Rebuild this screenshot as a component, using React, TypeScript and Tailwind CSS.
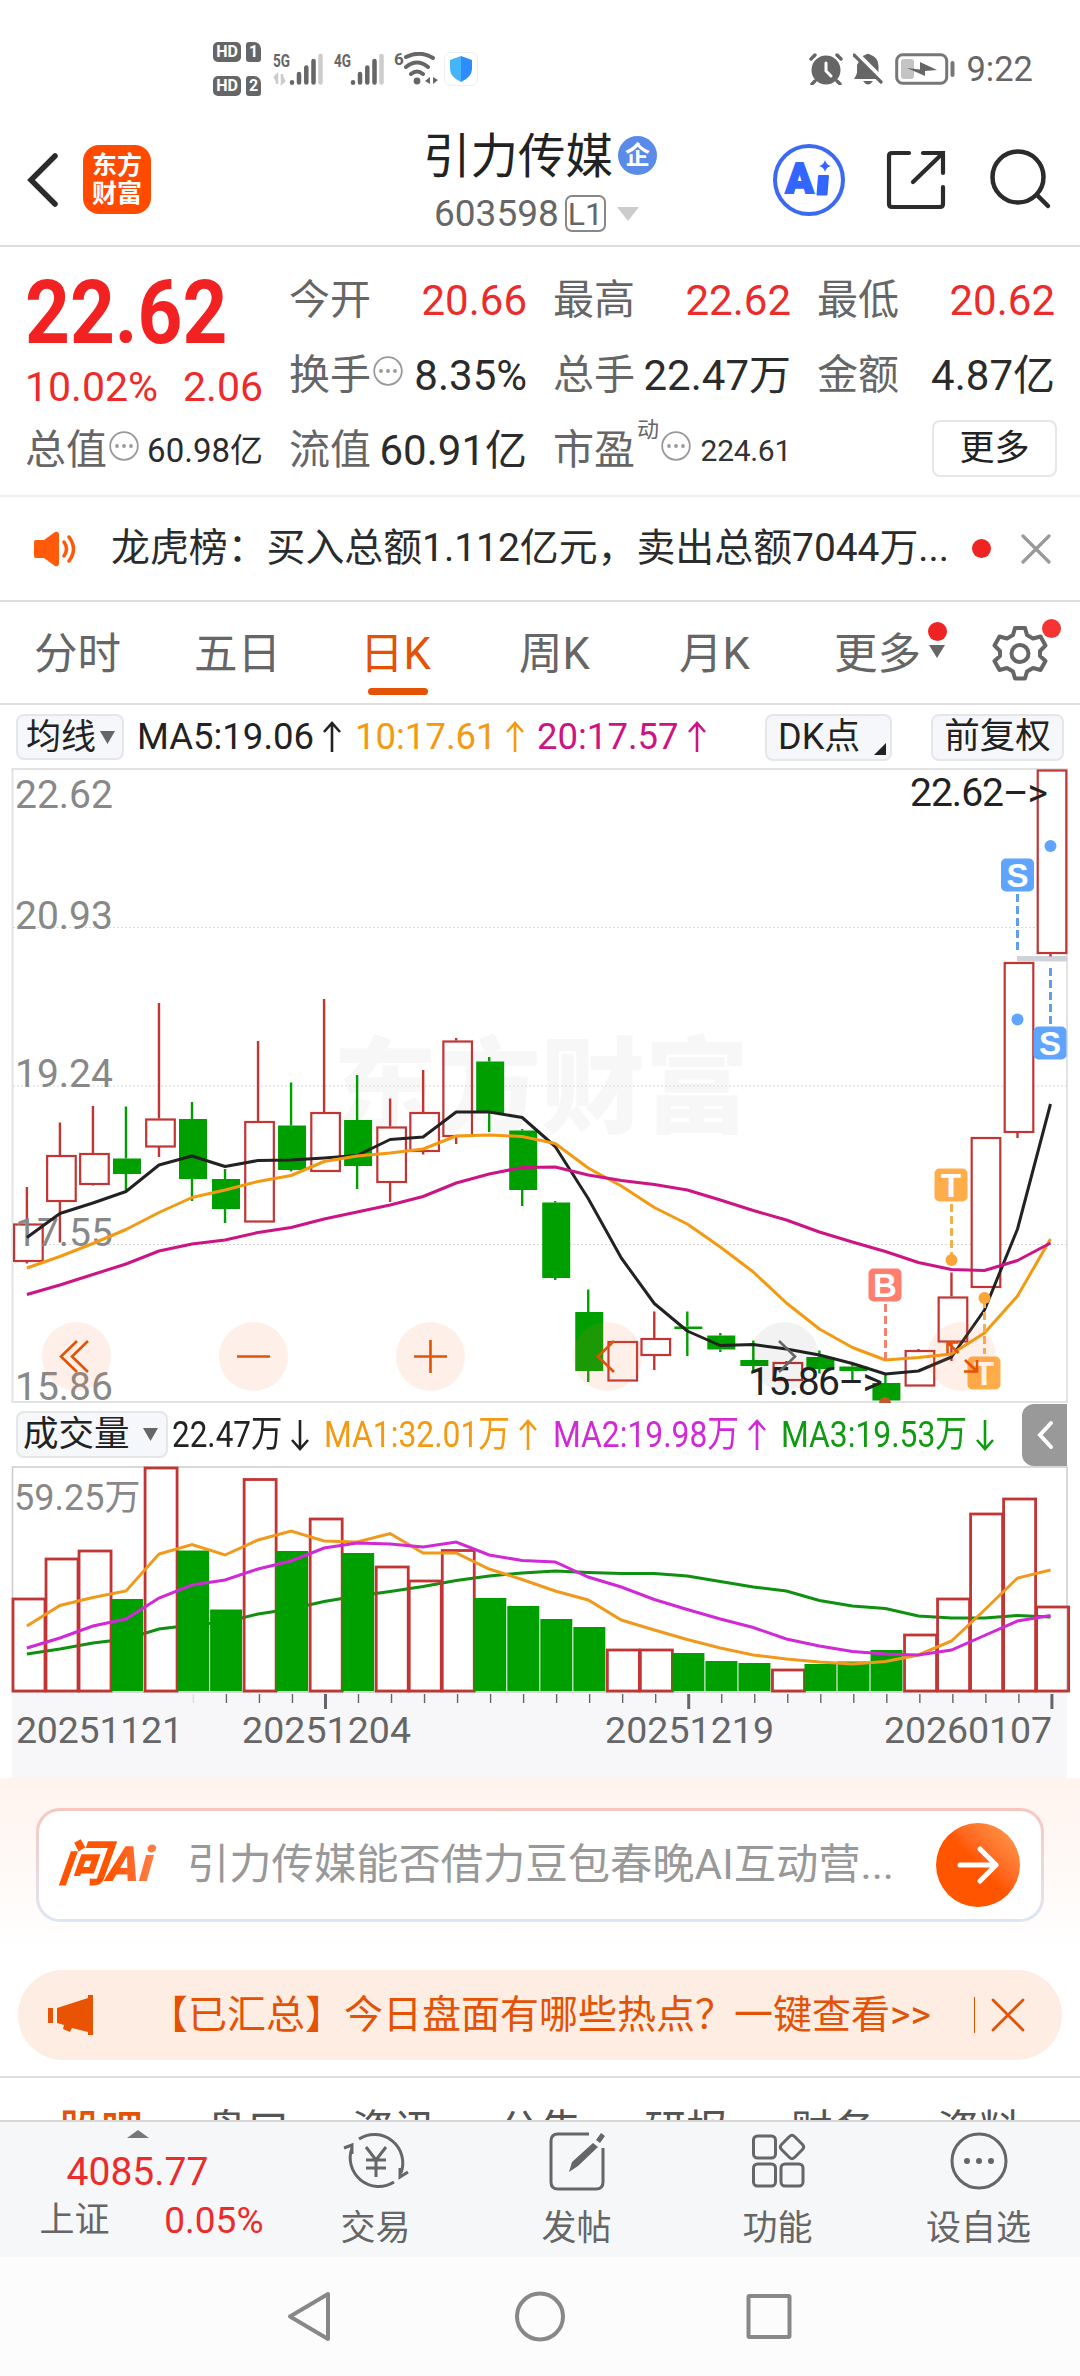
import React from "react";

type Candle = [up: number, high: number, top: number, bottom: number, low: number];

const STEP = 33.02;
const FIRST_X = 26.9;
const cx = (i: number) => FIRST_X + i * STEP;

// [up, high, bodyTop, bodyBottom, low] in chart space
const candles: Candle[] = [
  [1, 1187, 1223.5, 1261, 1263.5],
  [1, 1122.5, 1155, 1201, 1242.5],
  [1, 1106, 1153, 1184, 1185.5],
  [0, 1106.5, 1158.5, 1174, 1190],
  [1, 1003, 1118.5, 1146.5, 1157],
  [0, 1102, 1119, 1179, 1201],
  [0, 1169, 1179, 1209, 1223],
  [1, 1041, 1121, 1221.5, 1221.5],
  [0, 1082.5, 1125.5, 1170, 1171.5],
  [1, 999, 1112, 1171, 1171],
  [0, 1075, 1120, 1166, 1189],
  [1, 1098.5, 1126.5, 1182, 1202],
  [1, 1070, 1112, 1151, 1154.5],
  [1, 1038, 1040.5, 1136, 1144],
  [0, 1057, 1061.5, 1113, 1132],
  [0, 1129, 1130.5, 1190, 1206],
  [0, 1201, 1202.5, 1278, 1280],
  [0, 1289.5, 1312, 1371, 1382],
  [1, 1341, 1341, 1380.5, 1380.5],
  [1, 1311.5, 1338, 1355, 1370],
  [0, 1311.5, 1326.5, 1329, 1356],
  [0, 1333, 1335.5, 1349.5, 1352],
  [0, 1340.5, 1360, 1366, 1371],
  [1, 1361, 1362, 1380, 1380],
  [0, 1350.5, 1357, 1369, 1373.5],
  [0, 1363.5, 1366.5, 1371, 1380],
  [0, 1374.5, 1383, 1400.5, 1400.5],
  [1, 1349, 1350, 1385.5, 1385.5],
  [1, 1272.5, 1296.5, 1341.5, 1361],
  [1, 1137, 1137, 1287, 1287],
  [1, 962, 962, 1132, 1138],
  [1, 769.5, 769.5, 953, 956.5],
];

const ma5 = [
  1237.5, 1213.5, 1203, 1191.5, 1165, 1156, 1166.5, 1160.5, 1160, 1158, 1155.5,
  1139.5, 1137, 1112, 1112, 1117.5, 1146.5, 1198.5, 1258, 1303.5, 1331, 1345.5,
  1344.5, 1349, 1355, 1363.5, 1374, 1371, 1357, 1310, 1229, 1104,
];
const ma10 = [
  1268, 1256.5, 1243.5, 1229.5, 1212.5, 1197.5, 1190, 1181.5, 1175.5, 1161.5,
  1156, 1153, 1149, 1136, 1135, 1136.5, 1143.5, 1168, 1186, 1207.5, 1224, 1247,
  1272, 1303, 1329, 1347.5, 1360, 1357.5, 1354, 1333, 1296, 1239,
];
const ma20 = [
  1294.5, 1285, 1274.5, 1264, 1251, 1244, 1240, 1232.5, 1227.5, 1219, 1212,
  1205, 1196.5, 1183, 1174, 1167.5, 1167, 1175, 1180.5, 1184.5, 1190, 1200,
  1210.5, 1220, 1232, 1242, 1251.5, 1262.5, 1269.5, 1270.5, 1260.5, 1243,
];

const volumes = [
  1598, 1558, 1550, 1599, 1467, 1550.5, 1609.5, 1478.5, 1551, 1518, 1553, 1566,
  1580, 1549.5, 1598, 1606, 1619, 1627, 1649, 1649, 1653, 1661, 1663, 1669,
  1664, 1661.5, 1650, 1634, 1598, 1513, 1498, 1606,
];
const volMa1 = [
  1626, 1605.5, 1597.5, 1591, 1554, 1544.5, 1555, 1540, 1531, 1541, 1542,
  1533.5, 1553, 1553, 1569, 1579.5, 1591, 1600, 1620, 1630, 1639.5, 1648, 1655,
  1659, 1662, 1664, 1661.5, 1655, 1641, 1610, 1578, 1570,
];
const volMa2 = [
  1648, 1638, 1626, 1619, 1598, 1585, 1580, 1569, 1561, 1548, 1543, 1544, 1547,
  1542, 1555, 1560.5, 1562, 1577, 1587, 1599.5, 1609.5, 1619, 1627.5, 1639,
  1646, 1651.5, 1654, 1655, 1650, 1635.5, 1621, 1615.5,
];
const volMa3 = [
  1654, 1649, 1643, 1639, 1629, 1625, 1622, 1614, 1609, 1601.5, 1596, 1591.5,
  1586.5, 1580.5, 1576, 1573, 1571, 1572.5, 1573.5, 1573.5, 1576, 1581.5, 1587,
  1591, 1600.5, 1606, 1608.5, 1616, 1618, 1618, 1615.5, 1617,
];

const toPoints = (ys: number[]) =>
  ys.map((y, i) => `${cx(i).toFixed(1)},${y}`).join(" ");

const RED = "#c23535";
const GREEN = "#009f00";

const Signal = ({ label, arrows }: { label: string; arrows?: boolean }) => (
  <svg width="52" height="34" viewBox="0 0 52 34">
    <text x="0" y="15" fontSize="18" fontWeight="700" fill="#666" textLength="17" lengthAdjust="spacingAndGlyphs">
      {label}
    </text>
    {arrows && (
      <path d="M1 26l3-3v9M9 22v9l3-3" fill="#ccc" stroke="#ccc" strokeWidth="2.500" />
    )}
    <g strokeWidth="4.500" strokeLinecap="round" stroke="#666">
      <path d="M19 30.200v.500M26 22v8.500M33.300 15.500v15M40.500 9v21.500" />
      <path d="M47.500 4v26.500" stroke="#ccc" />
    </g>
  </svg>
);

const HdBadge = ({ n }: { n: string }) => (
  <div className="flex gap-[5px]">
    <span className="flex h-5 w-7 items-center justify-center rounded-[5px] bg-[#666] text-[16px] font-bold leading-[20px] text-white">
      HD
    </span>
    <span className="flex h-5 w-[15px] items-center justify-center rounded-[3px] rounded-tr-[7px] bg-[#666] text-[16px] font-bold leading-[20px] text-white">
      {n}
    </span>
  </div>
);

const StatusBar = () => (
  <div className="flex h-[116px] pl-[213px] pr-[47px] pt-[42px] text-[#666]">
    <div className="flex flex-col gap-[14px]">
      <HdBadge n="1" />
      <HdBadge n="2" />
    </div>
    <div className="ml-[12px] mt-[10px] flex h-[34px]">
      <Signal label="5G" arrows />
      <div className="w-[9px]" />
      <Signal label="4G" />
      <svg className="ml-[8px]" width="46" height="34" viewBox="0 0 46 34">
        <text x="0" y="13" fontSize="17" fontWeight="700" fill="#666">6</text>
        <g fill="none" stroke="#666" strokeWidth="4" strokeLinecap="round">
          <path d="M12 5q14-7 27 1M12 15q11-9 22 0M17 22q6-5 12 0" />
        </g>
        <circle cx="23" cy="29" r="3.400" fill="#666" />
        <path d="M31 29l5-4v7zM39 25v7l5-4z" fill="#666" />
      </svg>
      <span className="ml-[4px] flex h-[34px] w-[34px] items-center justify-center rounded-[7px] border border-[#eee]">
        <svg width="24" height="26" viewBox="0 0 24 26">
          <path d="M12 0l11 4v9q0 8-11 13z" fill="#2f8cff" />
          <path d="M12 0L1 4v9q0 8 11 13z" fill="#45b4f8" />
        </svg>
      </span>
    </div>
    <div className="ml-auto mt-[10px] flex h-[34px] items-center">
      <svg width="34" height="32" viewBox="0 0 34 32">
        <circle cx="17" cy="17" r="14.500" fill="#666" />
        <path d="M2 6l4-4M32 6l-4-4M6 28l-3 3M28 28l3 3" stroke="#666" strokeWidth="3.400" strokeLinecap="round" />
        <path d="M17 10v8l5 5" stroke="#fff" strokeWidth="3" fill="none" strokeLinecap="round" />
      </svg>
      <svg className="ml-[10px]" width="31" height="32" viewBox="0 0 31 32">
        <path d="M8 5Q10 2 13 1.500Q15 0 17 1.500Q25 4 25.500 13V20L27 26H1Q3 23 4 20V12Z" fill="#666" />
        <path d="M10 28h10q-5 7-10 0z" fill="#666" />
        <path d="M3 0l27 27" stroke="#fff" strokeWidth="5" />
        <path d="M1 2l27 27" stroke="#666" strokeWidth="3.200" strokeLinecap="round" />
      </svg>
      <svg className="ml-[11px]" width="60" height="32" viewBox="0 0 60 32">
        <rect x="1.700" y="1.700" width="50" height="28.600" rx="6" fill="none" stroke="#777" strokeWidth="3" />
        <rect x="6" y="6" width="13" height="20" rx="3" fill="#c4c4c4" />
        <path d="M12 15l13 1.500V9l17 8-12 1v5z" fill="#666" />
        <rect x="55.500" y="8" width="4" height="16" rx="2" fill="#777" />
      </svg>
      <span className="ml-[11px] text-[34.500px] leading-none">9:22</span>
    </div>
  </div>
);

const Header = () => (
  <header className="flex h-[131px] items-start border-b-2 border-[#ddd] pl-[26px] pr-[28px]">
    <svg className="mt-[36px]" width="34" height="56" viewBox="0 0 34 56">
      <path d="M29 4L5 28l24 24" fill="none" stroke="#2b2b2b" strokeWidth="5.500" strokeLinecap="round" />
    </svg>
    <div className="ml-[23px] mt-[29px] flex h-[69px] w-[68px] flex-col items-center justify-center rounded-[16px] bg-[#ff4a00] text-[25px] font-bold leading-[28px] text-white">
      <span>东方</span>
      <span>财富</span>
    </div>
    <div className="ml-[272px] flex w-[240px] flex-col">
      <div className="mt-[11px] flex h-[56px] items-center">
        <span className="pt-[5px] text-[47.500px] leading-none text-[#222]">引力传媒</span>
        <span className="ml-[5px] flex h-[39px] w-[39px] items-center justify-center rounded-full bg-[#5b8be8] text-[25px] font-bold leading-none text-white">
          企
        </span>
      </div>
      <div className="ml-[11px] flex h-[62px] items-center pb-[1px] text-[37px] leading-none text-[#666]">
        <span>603598</span>
        <span className="ml-[6px] flex h-[37px] w-[41px] items-center justify-center rounded-[7px] border-2 border-[#888] text-[32px]">
          L1
        </span>
        <svg className="ml-[11px]" width="22" height="14" viewBox="0 0 22 14">
          <path d="M0 0h22L11 14z" fill="#ccc" />
        </svg>
      </div>
    </div>
    <svg className="ml-auto mt-[27px]" width="74" height="74" viewBox="0 0 74 74">
      <circle cx="37" cy="37" r="34" fill="none" stroke="#3c69f2" strokeWidth="4" />
      <text x="13.500" y="50" fontSize="43" fontWeight="900" fill="#3366ff" stroke="#3366ff" strokeWidth="2" textLength="28" lengthAdjust="spacingAndGlyphs">
        A
      </text>
      <path d="M47 33h9l-1.500 18.500h-9z" fill="#3366ff" stroke="#3366ff" strokeWidth="2" strokeLinejoin="round" />
      <path d="M53 17q1.200 4.800 6 6-4.800 1.200-6 6-1.200-4.800-6-6 4.800-1.200 6-6z" fill="#3366ff" />
    </svg>
    <svg className="ml-[39px] mt-[33px]" width="62" height="62" viewBox="0 0 62 62">
      <g fill="none" stroke="#2b2b2b" strokeWidth="4.200" strokeLinecap="round">
        <path d="M24 4H7q-3 0-3 3v48q0 3 3 3h48q3 0 3-3V38" />
        <path d="M38 4h20v20M58 4L28 33" />
      </g>
    </svg>
    <svg className="ml-[41px] mt-[31px]" width="64" height="64" viewBox="0 0 64 64">
      <g fill="none" stroke="#2b2b2b" strokeWidth="4.500" strokeLinecap="round">
        <circle cx="30" cy="30" r="25.500" />
        <path d="M49 48l11 11" />
      </g>
    </svg>
  </header>
);

const Dots = () => (
  <svg className="shrink-0" width="30" height="30" viewBox="0 0 30 30">
    <circle cx="15" cy="15" r="13.800" fill="none" stroke="#999" strokeWidth="1.800" />
    <g fill="#999">
      <circle cx="8" cy="15" r="1.900" />
      <circle cx="15" cy="15" r="1.900" />
      <circle cx="22" cy="15" r="1.900" />
    </g>
  </svg>
);

type StatProps = {
  label: string;
  value: string;
  red?: boolean;
  dots?: boolean;
  small?: boolean;
};

const Stat = ({ label, value, red, dots, small }: StatProps) => (
  <div className="flex h-[75px] items-center whitespace-nowrap text-[41px] leading-none">
    <span className="text-[#666]">{label}</span>
    {dots && (
      <span className="-mt-[10px] ml-[2px] flex">
        <Dots />
      </span>
    )}
    <span
      className={`ml-auto ${red ? "text-[#ec2b2b]" : "text-[#2b2b2b]"} ${
        small ? "text-[33px]" : "text-[42px]"
      }`}
    >
      {value}
    </span>
  </div>
);

const Quote = () => (
  <section className="grid h-[250px] grid-cols-4 gap-x-[26px] border-b-2 border-[#eee] px-[25px] pt-[16px]">
    <div>
      <div className="flex h-[99px] items-center text-[#f22222]">
        <span className="origin-left scale-x-[.88] text-[89px] font-bold leading-none">22.62</span>
      </div>
      <div className="flex h-[51px] items-center justify-between text-[41px] leading-none text-[#ec2b2b]">
        <span>10.02%</span>
        <span>2.06</span>
      </div>
      <Stat label="总值" value="60.98亿" dots small />
    </div>
    <div>
      <Stat label="今开" value="20.66" red />
      <Stat label="换手" value="8.35%" dots />
      <Stat label="流值" value="60.91亿" />
    </div>
    <div>
      <Stat label="最高" value="22.62" red />
      <Stat label="总手" value="22.47万" />
      <div className="flex h-[75px] items-center text-[41px] leading-none">
        <span className="text-[#666]">市盈</span>
        <span className="-mt-[42px] ml-[2px] text-[22px] text-[#666]">动</span>
        <span className="-mt-[10px] ml-[2px] flex">
          <Dots />
        </span>
        <span className="ml-auto text-[30px] tracking-[-0.300px] text-[#333]">224.61</span>
      </div>
    </div>
    <div>
      <Stat label="最低" value="20.62" red />
      <Stat label="金额" value="4.87亿" />
      <div className="flex h-[75px] items-center justify-end pb-[4px]">
        <button className="-mr-[2px] h-[57px] w-[125px] rounded-[8px] border-2 border-[#e6e6e6] text-[35px] leading-none text-[#222]">
          更多
        </button>
      </div>
    </div>
  </section>
);

const Notice = () => (
  <section className="flex h-[105px] items-center border-b-2 border-[#ddd] pl-[33px] pr-[29px]">
    <svg width="46" height="36" viewBox="0 0 46 36">
      <path d="M3 9h8L22 1q4-1 4 3v28q0 4-4 3L11 27H3q-2 0-2-2V11q0-2 2-2z" fill="#ff5a0a" />
      <path d="M31 11q5 7 0 14M36 6q9 12 0 24" fill="none" stroke="#ff5a0a" strokeWidth="3.500" strokeLinecap="round" />
    </svg>
    <span className="ml-[32px] whitespace-nowrap text-[38.900px] leading-none text-[#2b2b2b]">
      龙虎榜：买入总额1.112亿元，卖出总额7044万...
    </span>
    <span className="ml-auto h-[19px] w-[19px] rounded-full bg-[#f02323]" />
    <svg className="ml-[30px]" width="30" height="30" viewBox="0 0 30 30">
      <path d="M2 2l26 26M28 2L2 28" stroke="#999" strokeWidth="3.200" strokeLinecap="round" />
    </svg>
  </section>
);

const Tabs = () => (
  <nav className="flex h-[103px] items-center border-b-2 border-[#ddd] pl-[34px] pt-[4px] text-[43.500px] leading-none text-[#666]">
    <span className="w-[160px]">分时</span>
    <span className="w-[166px]">五日</span>
    <span className="relative w-[159px] text-[#e35205]">
      日K
      <i className="absolute -bottom-[19px] left-[8px] h-[7px] w-[60px] rounded-full bg-[#e35205]" />
    </span>
    <span className="w-[160px]">周K</span>
    <span className="w-[155px]">月K</span>
    <span className="relative flex w-[158px] items-center">
      更多
      <svg className="-mt-[6px] ml-[8px]" width="16" height="13" viewBox="0 0 16 13">
        <path d="M0 0h16L8 13z" fill="#666" />
      </svg>
      <i className="absolute -top-[11px] left-[94px] h-[19px] w-[19px] rounded-full bg-[#f02323]" />
    </span>
    <span className="relative -mt-[4px]">
      <svg width="56" height="56" viewBox="0 0 56 56">
        <path
          d="M23 3h10l2 7 6 3.500 7.500-2 5 9L48 26v5l5.500 5-5 9-7.500-2-6 3.500-2 7H23l-2-7-6-3.500-7.500 2-5-9L8 31v-5l-5.500-5.500 5-9 7.500 2L21 10z"
          fill="none"
          stroke="#666"
          strokeWidth="4"
          strokeLinejoin="round"
        />
        <circle cx="28" cy="28.500" r="8.500" fill="none" stroke="#666" strokeWidth="4" />
      </svg>
      <i className="absolute -top-[6px] left-[50px] h-[19px] w-[19px] rounded-full bg-[#f53333]" />
    </span>
  </nav>
);

const Arrow = ({ down }: { down?: boolean }) => (
  <svg className="ml-[8px] shrink-0" width="20" height="32" viewBox="0 0 20 32">
    <path
      d={down ? "M10 1v29M2 21l8 9 8-9" : "M10 31V2M2 11l8-9 8 9"}
      fill="none"
      stroke="currentColor"
      strokeWidth="2.600"
    />
  </svg>
);

const MaRow = () => (
  <div className="flex h-[63px] items-center px-[16px] pt-[1px] text-[36.500px] leading-none text-[#222]">
    <button className="flex h-[46px] w-[108px] items-center rounded-[8px] border-2 border-[#e4e6ea] bg-[#f6f7fa] pl-[8px] text-[35px]">
      均线
      <svg className="ml-[4px] shrink-0" width="15" height="13" viewBox="0 0 15 13">
        <path d="M0 0h15L7.500 13z" fill="#666" />
      </svg>
    </button>
    <span className="ml-[13px] flex w-[218px] items-center">
      MA5:19.06
      <Arrow />
    </span>
    <span className="flex w-[182px] items-center text-[#f39a12]">
      10:17.61
      <Arrow />
    </span>
    <span className="flex items-center text-[#cc1484]">
      20:17.57
      <Arrow />
    </span>
    <button className="relative ml-auto flex h-[47px] w-[127px] items-center rounded-[8px] border-2 border-[#e4e6ea] bg-[#f6f7fa] pl-[11px] text-[36px]">
      DK点
      <svg className="absolute bottom-[4px] right-[4px]" width="12" height="12" viewBox="0 0 12 12">
        <path d="M12 0v12H0z" fill="#222" />
      </svg>
    </button>
    <button className="ml-[39px] h-[47px] w-[133px] rounded-[8px] border-2 border-[#e4e6ea] bg-[#f6f7fa] text-[35.500px]">
      前复权
    </button>
  </div>
);

type TagProps = { x: number; y: number; label: string; color: string };

const Tag = ({ x, y, label, color }: TagProps) => (
  <g>
    <rect x={x - 16.5} y={y} width="33" height="33" rx="5" fill={color} />
    <text x={x} y={y + 28} fontSize="33" fontWeight="700" fill="#fff" textAnchor="middle" fontFamily="Liberation Sans, Inter, sans-serif">
      {label}
    </text>
  </g>
);

const KChart = () => (
  <svg className="block" width="1080" height="635" viewBox="0 768 1080 635">
    <rect x="12.500" y="769" width="1054.500" height="633" fill="none" stroke="#e2e2e2" strokeWidth="2" />
    <text x="541" y="1125" fontSize="104" fontWeight="900" fill="#f7f7f7" textAnchor="middle">
      东方财富
    </text>
    {[927.5, 1086, 1244.5].map((y) => (
      <path key={y} d={`M13 ${y}H1067`} stroke="#d8d8d8" strokeWidth="1.200" strokeDasharray="2 2" />
    ))}
    <rect x="1017" y="956" width="50" height="5.500" fill="#cfd2d8" />
    {candles.map(([up, high, top, bottom, low], i) => {
      const x = cx(i);
      const color = up ? RED : GREEN;
      return (
        <g key={i}>
          <path d={`M${x} ${high}V${top}M${x} ${bottom}V${low}`} stroke={color} strokeWidth="2.400" />
          {up ? (
            <rect x={x - 12.8} y={top + 1} width="28.600" height={bottom - top - 1} fill={i === 13 ? "none" : "#fff"} stroke={RED} strokeWidth="2.200" />
          ) : (
            <rect x={x - 13} y={top} width="28" height={bottom - top} fill={GREEN} />
          )}
        </g>
      );
    })}
    <g fontSize="39" fill="#888">
      <text x="15" y="808">22.62</text>
      <text x="15" y="929">20.93</text>
      <text x="15" y="1087">19.24</text>
      <text x="15" y="1246">17.55</text>
      <text x="15" y="1400">15.86</text>
    </g>
    <g fill="none" strokeWidth="3" strokeLinejoin="round">
      <polyline points={toPoints(ma5)} stroke="#222" />
      <polyline points={toPoints(ma10)} stroke="#f39a12" />
      <polyline points={toPoints(ma20)} stroke="#cc1484" />
    </g>
    <circle cx="885" cy="1403" r="6" fill="#c2572b" />

    {/* buy / sell marks */}
    <g strokeWidth="3" strokeDasharray="8 4" fill="none">
      <path d="M1017.500 894V950M1050.500 968V1024" stroke="#5f9fea" />
      <path d="M951.500 1204V1258M984.500 1300V1354" stroke="#f4b04f" />
      <path d="M885.500 1304V1360" stroke="#f4806f" />
    </g>
    <circle cx="1050.500" cy="846" r="6" fill="#5fa4ff" />
    <circle cx="1017.500" cy="1019.500" r="6" fill="#5fa4ff" />
    <circle cx="951.500" cy="1260" r="6" fill="#fba43a" />
    <circle cx="984.500" cy="1298" r="6" fill="#fba43a" />
    <Tag x={1017.5} y={858.5} label="S" color="#5fa4ff" />
    <Tag x={1050} y={1026.5} label="S" color="#5fa4ff" />
    <Tag x={951} y={1168.5} label="T" color="#ffad4a" />
    <Tag x={885} y={1268.5} label="B" color="#ff7e6e" />
    <Tag x={984} y={1356.5} label="T" color="#ffad4a" />

    <text x="910" y="806" fontSize="39" fill="#222" textLength="138">22.62–&gt;</text>
    <text x="748" y="1395" fontSize="39" fill="#222" textLength="135">15.86–&gt;</text>

    {/* floating chart controls */}
    {[76.5, 253.5, 430.5, 607.5, 961.5].map((x) => (
      <circle key={x} cx={x} cy="1356.500" r="34.500" fill="#f7763a" fillOpacity=".11" />
    ))}
    <circle cx="784.500" cy="1356.500" r="34.500" fill="#000" fillOpacity=".05" />
    <g fill="none" stroke="#e35205" strokeWidth="2.600">
      <path d="M77 1341l-16 15.500 16 15.500M88 1341l-16 15.500 16 15.500" />
      <path d="M237 1356.500h33M414 1356.500h33M430.500 1340v33" />
      <path d="M614 1341l-16 15.500 16 15.500" />
      <path d="M958.500 1353l-11-10.500M947.500 1353v-10.500h11M965 1360l12 11.500M977 1360v11.500h-13" />
    </g>
    <path d="M779 1341l16 15.500-16 15.500" fill="none" stroke="#666" strokeWidth="2.600" />
  </svg>
);

const VolumeRow = () => (
  <div className="flex h-[63px] items-center whitespace-nowrap pl-[16px] pr-[13px] text-[37px] leading-none text-[#222]">
    <button className="flex h-[47px] w-[152px] shrink-0 items-center rounded-[8px] border-2 border-[#e4e6ea] bg-[#f6f7fa] pl-[5px] text-[35.500px]">
      成交量
      <svg className="ml-[13px] shrink-0" width="15" height="13" viewBox="0 0 15 13">
        <path d="M0 0h15L7.500 13z" fill="#666" />
      </svg>
    </button>
    <span className="ml-[4px] flex w-[152px] items-center">
      <span className="w-[110px] origin-left scale-x-[.85]">22.47万</span>
      <Arrow down />
    </span>
    <span className="flex w-[229px] items-center text-[#f39a12]">
      <span className="w-[186px] origin-left scale-x-[.86]">MA1:32.01万</span>
      <Arrow />
    </span>
    <span className="flex w-[228px] items-center text-[#cf2ad6]">
      <span className="w-[186px] origin-left scale-x-[.86]">MA2:19.98万</span>
      <Arrow />
    </span>
    <span className="flex items-center text-[#109a10]">
      <span className="w-[186px] origin-left scale-x-[.86]">MA3:19.53万</span>
      <Arrow down />
    </span>
    <span className="ml-auto flex h-[62px] w-[45px] shrink-0 items-center justify-center rounded-l-[12px] bg-[#999]">
      <svg width="18" height="30" viewBox="0 0 18 30">
        <path d="M15 3L4 15l11 12" fill="none" stroke="#fff" strokeWidth="4" strokeLinecap="round" />
      </svg>
    </span>
  </div>
);

const VolumeChart = () => (
  <svg className="block" width="1080" height="312" viewBox="0 1466 1080 312">
    <rect x="12" y="1692" width="1055" height="86" fill="#f7f7fa" />
    <rect x="12.500" y="1467" width="1054.500" height="225" fill="none" stroke="#ccc" strokeWidth="1.500" />
    <polyline points={toPoints(volMa3)} fill="none" stroke="#109010" strokeWidth="3" />
    {volumes.map((y, i) => {
      const x = 11.5 + i * STEP;
      return candles[i][0] ? (
        <rect key={i} x={x + 1.5} y={y + 1} width="32" height={1690 - y} fill="none" stroke={RED} strokeWidth="2.800" />
      ) : (
        <rect key={i} x={x + 0.5} y={y} width="32" height={1691 - y} fill={GREEN} />
      );
    })}
    {/* tail of the slow average stays above the last filled bars */}
    <polyline points={toPoints(volMa1)} fill="none" stroke="#f0991c" strokeWidth="3" />
    <polyline points={toPoints(volMa2)} fill="none" stroke="#cf2ad6" strokeWidth="3" />
    <text x="14" y="1510" fontSize="36" fill="#888">59.25万</text>
    {volumes.map((_, i) => {
      if (i < 5) return null;
      const major = i === 9 || i === 20 || i === 31;
      const x = cx(i) + 1.4;
      return (
        <path
          key={i}
          d={`M${x} 1694V${major ? 1709 : 1703}`}
          stroke={i === 5 ? "#ddd" : "#666"}
          strokeWidth={major ? 3 : 1.4}
        />
      );
    })}
    <g fontSize="37.500" fill="#666">
      <text x="16" y="1743" textLength="167">20251121</text>
      <text x="242" y="1743" textLength="169">20251204</text>
      <text x="605" y="1743" textLength="169">20251219</text>
      <text x="884" y="1743" textLength="168">20260107</text>
    </g>
  </svg>
);

const AskBar = () => (
  <section className="h-[192px] bg-gradient-to-b from-[#fff3ee] to-white to-90% px-[36px] pt-[30px]">
    <div className="h-[114px] rounded-[24px] bg-gradient-to-b from-[#f6c6bf] to-[#dde7f4] p-[3px]">
      <div className="flex h-full items-center rounded-[21px] bg-white pl-[20px] pr-[21px]">
        <span className="w-[110px] -skew-x-6 whitespace-nowrap bg-gradient-to-r from-[#ff5500] from-50% to-[#ff8a50] bg-clip-text text-[49px] font-black italic leading-[60px] text-transparent">
          问Ai
        </span>
        <span className="ml-[18px] whitespace-nowrap text-[42.300px] leading-none text-[#999]">
          引力传媒能否借力豆包春晚AI互动营...
        </span>
        <button className="ml-auto flex h-[84px] w-[84px] shrink-0 items-center justify-center rounded-full bg-gradient-to-tr from-[#ff5500] from-50% to-[#ffa050]">
          <svg width="42" height="38" viewBox="0 0 42 38">
            <path d="M3 19h36M23 3l16 16-16 16" fill="none" stroke="#fff" strokeWidth="5" strokeLinecap="round" strokeLinejoin="round" />
          </svg>
        </button>
      </div>
    </div>
  </section>
);

const HotBanner = () => (
  <section className="h-[108px] border-b-2 border-[#ddd] px-[18px]">
    <div className="flex h-[90px] items-center rounded-full bg-[#fdede3] pl-[30px] pr-[37px] text-[#e35205]">
      <svg width="46" height="40" viewBox="0 0 46 40">
        <path d="M0 13h5v15H0zM9 13l31-10V0h5v40h-5v-3l-16-4-2 4-7-3 1-4-7-2z" fill="#e95404" />
      </svg>
      <span className="ml-[55px] whitespace-nowrap text-[39px] leading-none">
        【已汇总】今日盘面有哪些热点？一键查看&gt;&gt;
      </span>
      <span className="ml-auto h-[36px] w-px bg-[#e35205]" />
      <svg className="ml-[16px]" width="34" height="34" viewBox="0 0 34 34">
        <path d="M2 2l30 30M32 2L2 32" stroke="#e35205" strokeWidth="2.800" strokeLinecap="round" />
      </svg>
    </div>
  </section>
);

const subTabs = ["股吧", "盘口", "资讯", "公告", "研报", "财务", "资料"];

const SubTabs = () => (
  <nav className="flex h-[42px] justify-between overflow-hidden px-[59px] pt-[32px] text-[42px] leading-none text-[#555]">
    {subTabs.map((tab, i) => (
      <span key={tab} className={i === 0 ? "font-medium text-[#e35205]" : ""}>
        {tab}
      </span>
    ))}
  </nav>
);

const ActionItem = ({ label, children }: { label: string; children: React.ReactNode }) => (
  <div className="flex w-[201px] flex-col items-center pt-[8px]">
    <svg width="68" height="62" viewBox="0 0 68 62" fill="none" stroke="#666" strokeWidth="3">
      {children}
    </svg>
    <span className="mt-[19px] text-[35px] leading-none text-[#666]">{label}</span>
  </div>
);

const BottomBar = () => (
  <footer className="flex h-[137px] border-t-2 border-[#d8d8d8] bg-[#f6f7f9]">
    <div className="flex w-[275px] flex-col items-center pt-[8px]">
      <svg width="22" height="8" viewBox="0 0 22 8">
        <path d="M11 0l11 8H0z" fill="#777" />
      </svg>
      <span className="mt-[14px] text-[39px] leading-[40px] text-[#ec2b2b]">4085.77</span>
      <div className="ml-[28px] mt-[12px] flex w-[224px] items-center justify-between text-[37px] leading-[34px]">
        <span className="text-[35px] text-[#666]">上证</span>
        <span className="text-[#ec2b2b]">0.05%</span>
      </div>
    </div>
    <ActionItem label="交易">
      <path d="M17 9A28.500 28.500 0 0 1 59 43M52 52A28.500 28.500 0 0 1 10 18M2 18l8-3v9M66 42l-8 5V38" />
      <path d="M24 17l10 13 10-13M24 30h20M24 38h20M34 30v17" />
    </ActionItem>
    <ActionItem label="发帖">
      <path d="M46 4H15q-7 0-7 7v41q0 7 7 7h38q7 0 7-7V18" />
      <path d="M53 10l5-7 4 3-5 7zM26 42l3-10 21-19 5 4-20 19z" fill="#666" stroke="none" />
    </ActionItem>
    <ActionItem label="功能">
      <rect x="9.500" y="6" width="22" height="22" rx="4" />
      <rect x="9.500" y="34" width="22" height="22" rx="4" />
      <rect x="37" y="34" width="22" height="22" rx="4" />
      <path d="M45.500 6.500q2.500-2.500 5 0l8 8q2.500 2.500 0 5l-8 8q-2.500 2.500-5 0l-8-8q-2.500-2.500 0-5z" />
    </ActionItem>
    <ActionItem label="设自选">
      <circle cx="34" cy="31" r="27" />
      <g fill="#666" stroke="none">
        <circle cx="22" cy="31" r="3" />
        <circle cx="34" cy="31" r="3" />
        <circle cx="46" cy="31" r="3" />
      </g>
    </ActionItem>
  </footer>
);

const SystemNav = () => (
  <div className="h-[119px] bg-[#fcfcfc] pl-[285px] pt-[32px]">
    <svg width="510" height="54" viewBox="0 0 510 54" fill="none" stroke="#888" strokeWidth="4" strokeLinejoin="round">
      <path d="M43 5v45L5 27.500z" />
      <circle cx="255" cy="27.500" r="23" />
      <rect x="463.500" y="7" width="41" height="41" rx="1" />
    </svg>
  </div>
);

export default function App() {
  return (
    <div className="flex w-[1080px] flex-col overflow-hidden bg-white font-[Roboto,'Noto_Sans_CJK_SC',sans-serif]">
      <StatusBar />
      <Header />
      <Quote />
      <Notice />
      <Tabs />
      <div className="flex flex-col">
        <MaRow />
        <KChart />
        <VolumeRow />
        <VolumeChart />
      </div>
      <AskBar />
      <HotBanner />
      <SubTabs />
      <BottomBar />
      <SystemNav />
    </div>
  );
}
